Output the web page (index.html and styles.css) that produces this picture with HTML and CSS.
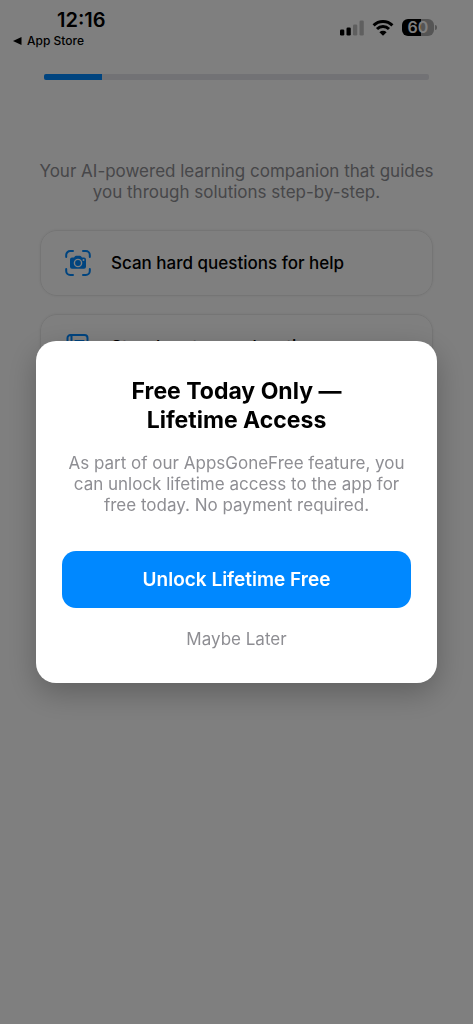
FILE: index.html
```html
<!DOCTYPE html>
<html lang="en">
<head>
<meta charset="utf-8">
<meta name="viewport" content="width=device-width, initial-scale=1">
<title>Lifetime Access</title>
<link rel="stylesheet" href="styles.css">
</head>
<body>
<div class="screen">
  <header class="status">
    <div class="status-left">
      <span class="clock">12:16</span>
      <a class="back" href="#"><svg width="9" height="8" viewBox="0 0 9 8" aria-hidden="true"><path d="M0 4 8.500 0v8z"/></svg>App Store</a>
    </div>
    <div class="status-right">
      <svg width="24" height="16" viewBox="0 0 24 16" aria-label="Signal">
        <rect x="0" y="9.500" width="4.300" height="6" rx="1.300"/>
        <rect x="6.500" y="7.500" width="4.300" height="8" rx="1.300"/>
        <rect class="faint" x="13" y="4.500" width="4.300" height="11" rx="1.300"/>
        <rect class="faint" x="19.500" y="0.500" width="4.300" height="15" rx="1.300"/>
      </svg>
      <svg class="wifi" width="22" height="16" viewBox="0 0 22 16" aria-label="Wi-Fi">
        <path class="arc" d="M1.600 5.400a13.300 13.300 0 0 1 18.800 0M5 9a8.500 8.500 0 0 1 12 0"/>
        <path d="M11 15.800 7.400 12.200a5.100 5.100 0 0 1 7.200 0z"/>
      </svg>
      <span class="battery"><span class="cell">60</span><span class="tip"></span></span>
    </div>
  </header>
  <main class="content">
    <div class="progress" role="progressbar" aria-label="Progress" aria-valuenow="15" aria-valuemin="0" aria-valuemax="100"><div class="progress-fill" style="width:15%"></div></div>
    <p class="intro">Your AI-powered learning companion that guides you through solutions step-by-step.</p>
    <ul class="features">
      <li class="card">
        <svg width="26" height="26" viewBox="0 0 26 26" aria-hidden="true">
          <path class="line" d="M1.200 7V5a4 4 0 0 1 4-4H8M18 1h2.800a4 4 0 0 1 4 4v2M24.800 19v2a4 4 0 0 1-4 4H18M8 25H5.200a4 4 0 0 1-4-4v-2"/>
          <path class="solid" fill-rule="evenodd" d="M7 7.500h2l1-1.300q.4-.5 1-.5h4q.6 0 1 .5l1 1.300h2q2 0 2 2v7.300q0 2-2 2H7q-2 0-2-2V9.500q0-2 2-2zM13 8.700a4.300 4.300 0 1 0 0 8.600 4.300 4.300 0 0 0 0-8.600zM13 10.100a2.900 2.900 0 1 1 0 5.800 2.900 2.900 0 0 1 0-5.800zM18.500 9a1 1 0 1 0 0 2 1 1 0 0 0 0-2z"/>
        </svg>
        <span>Scan hard questions for help</span>
      </li>
      <li class="card">
        <svg width="26" height="26" viewBox="0 0 26 26" aria-hidden="true">
          <path class="line" d="M5.500 1h14a3 3 0 0 1 3 3v18a3 3 0 0 1-3 3h-14a3 3 0 0 1-3-3V4a3 3 0 0 1 3-3zM6.500 1v24"/>
          <path class="line thin" d="M10 6.500h9M10 10h9"/>
        </svg>
        <span>Step-by-step explanations</span>
      </li>
    </ul>
  </main>
</div>
<div class="overlay">
  <section class="modal" role="dialog" aria-modal="true" aria-labelledby="offer-title">
    <h1 class="title" id="offer-title">Free Today Only —<br>Lifetime Access</h1>
    <p class="description">As part of our AppsGoneFree feature, you can unlock lifetime access to the app for free today. No payment required.</p>
    <button class="primary" type="button">Unlock Lifetime Free</button>
    <button class="later" type="button">Maybe Later</button>
  </section>
</div>
</body>
</html>
```
FILE: styles.css
```css
* { box-sizing: border-box; }
body {
  margin: 0;
  background: #fff;
  color: #000;
  font-family: Inter, "Liberation Sans", sans-serif;
}
.screen { min-height: 100vh; }
.status {
  display: flex;
  justify-content: space-between;
  align-items: flex-start;
  padding: 8px 36px 0 13px;
}
.status-left { display: flex; flex-direction: column; }
.clock {
  padding-left: 44px;
  font-size: 20px;
  line-height: 24px;
  font-weight: 600;
}
.back {
  display: flex;
  align-items: center;
  gap: 5px;
  color: #000;
  font-size: 12px;
  line-height: 18px;
  font-weight: 500;
  text-decoration: none;
}
.status-right { display: flex; align-items: center; gap: 8px; padding-top: 11px; }
.faint { opacity: .25; }
.arc { fill: none; stroke: #000; stroke-width: 3; }
.battery { display: flex; align-items: center; gap: 1px; }
.cell {
  width: 32px;
  border-radius: 6px;
  background: linear-gradient(90deg, #000 60%, #aaa 60%);
  color: #fff;
  font-size: 16px;
  line-height: 17px;
  font-weight: 600;
  text-align: center;
}
.tip { width: 2px; height: 5px; border-radius: 0 2px 2px 0; background: #aaa; }
.content { padding: 24px 40px 0; }
.progress {
  height: 6px;
  margin: 0 4px;
  border-radius: 2px;
  background: #e5e5ea;
  overflow: hidden;
}
.progress-fill { height: 100%; background: #08f; }
.intro {
  margin: 81px -8px 27px;
  color: #8e8e93;
  font-size: 17px;
  line-height: 21px;
  text-align: center;
}
.features {
  display: flex;
  flex-direction: column;
  gap: 18px;
  margin: 0;
  padding: 0;
  list-style: none;
}
.card {
  display: flex;
  align-items: center;
  gap: 20px;
  min-height: 66px;
  padding: 0 24px;
  border: 1px solid #ebebeb;
  border-radius: 17px;
  box-shadow: 0 0 3px rgba(0, 0, 0, .08);
  font-size: 17px;
  font-weight: 500;
}
.line { fill: none; stroke: #08f; stroke-width: 2; stroke-linecap: round; }
.thin { stroke-width: 1; }
.solid { fill: #08f; }
.overlay {
  position: fixed;
  inset: 0;
  display: flex;
  align-items: center;
  justify-content: center;
  padding: 0 36px;
  background: rgba(0, 0, 0, .5);
}
.modal {
  display: flex;
  flex-direction: column;
  align-items: center;
  width: 100%;
  padding: 36px 26px 29px;
  border-radius: 20px;
  background: #fff;
  box-shadow: 0 10px 30px rgba(0, 0, 0, .25);
  text-align: center;
}
.title { margin: 0; font-size: 23px; line-height: 29px; font-weight: 700; }
.description {
  margin: 18px 0 35px;
  color: #8e8e93;
  font-size: 17px;
  line-height: 21px;
}
.primary, .later { border: 0; font-family: inherit; cursor: pointer; }
.primary {
  width: 100%;
  height: 57px;
  border-radius: 14px;
  background: #08f;
  color: #fff;
  font-size: 19px;
  font-weight: 600;
}
.later {
  margin-top: 17px;
  padding: 4px 16px;
  background: none;
  color: #8e8e93;
  font-size: 17px;
  line-height: 21px;
}
```
